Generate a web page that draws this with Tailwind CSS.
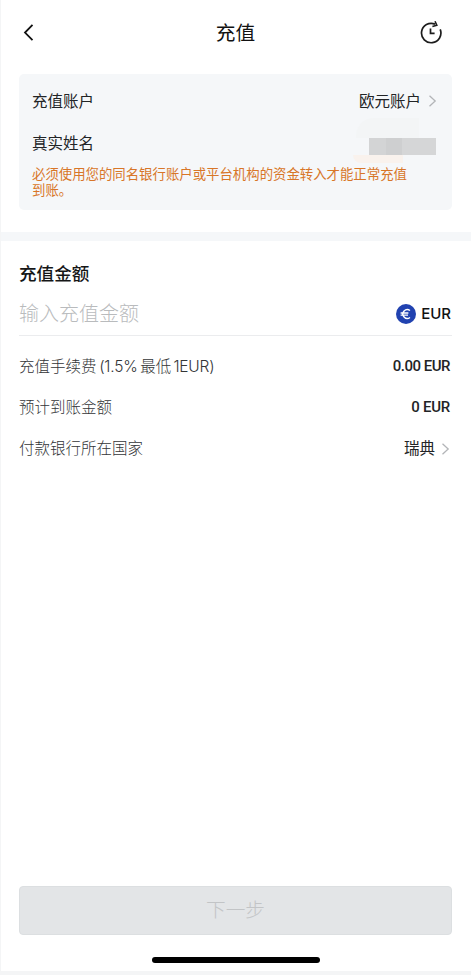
<!DOCTYPE html>
<html lang="zh-CN">
<head>
<meta charset="utf-8">
<meta name="viewport" content="width=device-width, initial-scale=1">
<title>充值</title>
<script src="https://cdn.jsdelivr.net/npm/@tailwindcss/browser@4"></script>
</head>
<body class="bg-white">
<div class="flex h-[975px] w-[471px] flex-col overflow-hidden border-b-4 border-l-[1px] border-[#f4f5f6] bg-white font-['Inter','Noto_Sans_CJK_SC',sans-serif] text-[15.5px] text-[#222426]">
  <header class="flex h-[74px] shrink-0 items-start justify-between pr-[28px] pl-[20px]">
    <svg class="mt-[23px] h-5 w-6 pr-1" viewBox="0 0 20 20" fill="none" stroke="#111" stroke-width="1.8"><path d="M11.5 1.9 4 9.6 11.5 17.2"/></svg>
    <h1 class="mt-[18px] ml-[7px] text-[19.7px] leading-[30px] font-normal text-[#111]">充值</h1>
    <svg class="mt-[20px] h-6 w-6" viewBox="0 0 24 24" fill="none" stroke="#1c1c1c" stroke-width="1.7"><path d="M21.2 9.4A9.7 9.7 0 1 1 16 4.1"/><path d="M11.5 8.5V13.4H15.6"/><path d="M16 1.2l1.8 4.1-4.4 1.2" stroke-width="1.6"/></svg>
  </header>

  <section class="ml-[18px] h-[136px] w-[433px] shrink-0 rounded-[5px] bg-[#f5f7f9] pt-[6px] pr-[15px] pl-[13px]">
    <div class="flex h-[42px] items-center justify-between">
      <span class="relative top-px">充值账户</span>
      <span class="flex items-center gap-[7px]"><span class="relative top-px">欧元账户</span>
        <svg class="h-3 w-[9px]" viewBox="0 0 9 12" fill="none" stroke="#b3b5b8" stroke-width="1.3"><path d="M1.5.7 7.2 6 1.5 11.3"/></svg>
      </span>
    </div>
    <div class="flex h-[42px] items-center justify-between">
      <span class="relative top-px">真实姓名</span>
      <div class="relative mt-[7px] mr-px flex h-[17px] w-[67px]">
        <span class="absolute -top-[20px] -left-[13px] h-[20px] w-[63px] rounded-tl-[18px] bg-[#f3f5f6]"></span>
        <span class="absolute top-[17px] -left-[16px] h-[8px] w-[50px] rounded-bl-[18px] bg-[#f9f2ed]"></span>
        <span class="relative w-[17px] bg-[#d3d4d5]"></span><span class="relative w-[16px] bg-[#cecfd0]"></span><span class="relative w-[34px] bg-[#d5d6d7]"></span>
      </div>
    </div>
    <p class="relative mt-[3px] w-[385px] text-[13.4px] leading-[15.5px] text-[#d87628]">必须使用您的同名银行账户或平台机构的资金转入才能正常充值<br>到账。</p>
  </section>

  <div class="mt-[22px] h-[9px] shrink-0 bg-[#f5f7f9]"></div>

  <main class="pr-[19px] pl-[18px]">
    <h2 class="mt-[20px] text-[17.6px] leading-[26px] font-medium text-[#151617]">充值金额</h2>
    <div class="flex h-[49px] items-center justify-between border-b border-[#ebecee] pt-[6px]">
      <span class="text-[20px] font-light text-[#b9bbbd]">输入充值金额</span>
      <span class="mr-px flex items-center gap-[5px] text-[15px] font-medium text-[#111]">
        <svg class="h-5 w-5" viewBox="0 0 20 20" fill="none"><circle cx="10" cy="10" r="10" fill="#2142b0"/><path d="M14 6.5A4.4 4.4 0 1 0 14 13.5M4.6 9H12.4M4.6 11.1H12" stroke="#fff" stroke-width="1.4"/></svg>
        EUR
      </span>
    </div>
    <div class="mt-[10px] flex h-[41px] items-center justify-between">
      <span class="font-light text-[#333537]">充值手续费<span class="tracking-[-0.2px] [word-spacing:-1.5px]"> (1.5% </span>最低<span class="tracking-[-0.2px] [word-spacing:-2px]"> 1EUR)</span></span>
      <span class="mr-[2px] font-['Roboto'] text-[15px] font-medium tracking-[-0.5px]">0.00 EUR</span>
    </div>
    <div class="flex h-[41px] items-center justify-between">
      <span class="font-light text-[#333537]">预计到账金额</span>
      <span class="mr-[2px] font-['Roboto'] text-[15px] font-medium tracking-[-0.25px]">0 EUR</span>
    </div>
    <div class="flex h-[41px] items-center justify-between">
      <span class="font-light text-[#333537]">付款银行所在国家</span>
      <span class="mr-[2px] flex items-center gap-[6px]">瑞典
        <svg class="h-3 w-[9px]" viewBox="0 0 9 12" fill="none" stroke="#b3b5b8" stroke-width="1.3"><path d="M1.5.7 7.2 6 1.5 11.3"/></svg>
      </span>
    </div>
  </main>

  <footer class="mt-auto flex shrink-0 flex-col items-center pr-px pb-[8px]">
    <button class="h-[49px] w-[433px] rounded-[4px] border border-[#dcdfe1] bg-[#e3e5e7] pt-px text-[19.7px] font-light text-[#c2c4c6]">下一步</button>
    <div class="mt-[22px] h-[6px] w-[168px] rounded-full bg-black"></div>
  </footer>
</div>
</body>
</html>
